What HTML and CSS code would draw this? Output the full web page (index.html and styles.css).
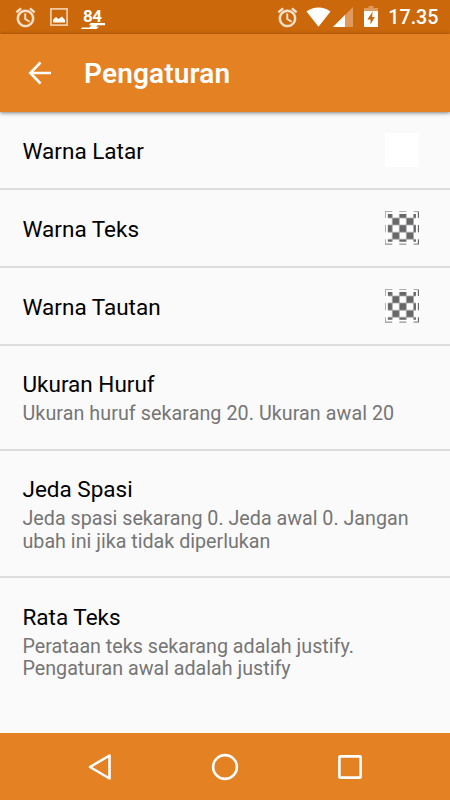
FILE: index.html
```html
<!DOCTYPE html>
<html lang="id">
<head>
<meta charset="utf-8">
<title>Pengaturan</title>
<link rel="stylesheet" href="styles.css">
</head>
<body>
<svg class="defs" width="0" height="0">
  <defs>
    <symbol id="alarm" viewBox="0 0 24 24">
      <path fill="currentColor" stroke="currentColor" stroke-width=".5" d="M22 5.720l-4.600-3.860-1.290 1.530 4.600 3.860L22 5.720zM7.880 3.390L6.600 1.860 2 5.710l1.290 1.530 4.590-3.850zM12.500 8H11v6l4.750 2.850.75-1.230-4-2.370V8zM12 4c-4.970 0-9 4.030-9 9s4.020 9 9 9a9 9 0 0 0 0-18zm0 16a7 7 0 1 1 0-14 7 7 0 0 1 0 14z"/>
    </symbol>
    <symbol id="checker" viewBox="0 0 34 34">
      <rect width="34" height="34" fill="#fff"/>
      <path fill="#67676a" d="M0 0h7.300v7H0zM14.300 0h7v7h-7zM28.500 0H34v7h-5.500zM7.300 7h7v7h-7zM21.300 7h7.200v7h-7.200zM0 14h7.300v7.200H0zM14.300 14h7v7.200h-7zM28.500 14H34v7.200h-5.500zM7.300 21.200h7v7h-7zM21.300 21.200h7.200v7h-7.200zM0 28.200h7.300V34H0zM14.300 28.200h7V34h-7zM28.500 28.200H34V34h-5.500z"/>
      <path stroke="#aaa" stroke-width=".8" fill="none" d="M2.700 7h29M2.700 14h29M2.700 21.200h29M2.700 28.200h29M7.300 3v28M14.300 3v28M21.300 3v28M28.500 3v28"/>
      <rect x="1.900" y="2" width="30" height="29.700" fill="none" stroke="#fff" stroke-width="1.900"/>
      <path fill="#fff" opacity=".45" d="M0 0h34v1H0zM0 33h34v1H0zM0 0h1v34H0z"/>
    </symbol>
  </defs>
</svg>
<div class="screen">
  <div class="status">
    <svg class="alarm-left" width="23" height="23"><use href="#alarm"/></svg>
    <svg class="picture" width="18" height="18" viewBox="0 0 18 18">
      <rect x=".9" y=".9" width="16.200" height="16.200" fill="none" stroke="#f6d3b1" stroke-width="1.600"/>
      <path fill="#fff" d="M3 14.500v-3l3-2.500 2.500 2L12 8.500l3 3.500v2.500z"/>
    </svg>
    <div class="battery-app">
      <span>84</span>
      <svg width="24" height="6" viewBox="0 0 24 6"><path fill="#fff" d="M9.500 0H24v2.300h-7.500L15 3.700h3L15.500 6H0l1-1.400h7.500L10.500 2.300H8z"/></svg>
    </div>
    <div class="system">
      <svg width="23" height="23"><use href="#alarm"/></svg>
      <svg class="wifi" width="25" height="20" viewBox="0 0 25 20"><path fill="#fff" d="M.5 4.500C7.500-1 17.500-1 24.500 4.500L12.500 19.800z"/></svg>
      <svg class="signal" width="20" height="20" viewBox="0 0 20 20"><path fill="#e09a5e" d="M20 0v20H0z"/><path fill="#fff" d="M12 8v12H0z"/></svg>
      <svg class="battery" width="14" height="21" viewBox="0 0 14 21">
        <path fill="#e09a5e" d="M4.500 0h5v2H14v4H0V2h4.500z"/><path fill="#fff" d="M0 5h14v16H0z"/>
        <path fill="#ca680b" d="M8.800 5.500L3.300 13.500h3.200V18.500L10.800 11H8z"/>
      </svg>
      <span class="clock">17.35</span>
    </div>
  </div>
  <header class="toolbar">
    <svg width="24" height="24" viewBox="0 0 24 24" fill="none" stroke="#fff" stroke-width="2.600"><path d="M23 12H2.500M12.500 1.500L2.300 12 12.500 22.500"/></svg>
    <h1>Pengaturan</h1>
  </header>
  <main class="list">
    <div class="row"><h2>Warna Latar</h2><div class="swatch"></div></div>
    <div class="row"><h2>Warna Teks</h2><svg class="chip" width="34" height="34"><use href="#checker"/></svg></div>
    <div class="row"><h2>Warna Tautan</h2><svg class="chip" width="34" height="34"><use href="#checker"/></svg></div>
    <div class="row detail one-line"><h2>Ukuran Huruf</h2><p>Ukuran huruf sekarang 20. Ukuran awal 20</p></div>
    <div class="row detail two-line"><h2>Jeda Spasi</h2><p>Jeda spasi sekarang 0. Jeda awal 0. Jangan<br>ubah ini jika tidak diperlukan</p></div>
    <div class="row detail last"><h2>Rata Teks</h2><p>Perataan teks sekarang adalah justify.<br>Pengaturan awal adalah justify</p></div>
  </main>
  <nav class="navbar">
    <svg width="24" height="28" viewBox="0 0 24 28"><path d="M21.500 2.500v23L2 14z"/></svg>
    <svg width="28" height="28" viewBox="0 0 28 28"><circle cx="14" cy="14" r="11.900"/></svg>
    <svg width="24" height="24" viewBox="0 0 24 24"><rect x="1.400" y="1.400" width="21.200" height="21.200" rx=".5"/></svg>
  </nav>
</div>
</body>
</html>
```
FILE: styles.css
```css
* { box-sizing: border-box; }

body, h1, h2, p { margin: 0; }

body {
  font-family: Roboto, sans-serif;
  background: #fafafa;
}

.defs { display: none; }

.screen {
  width: 450px;
  height: 800px;
  display: flex;
  flex-direction: column;
  overflow: hidden;
}

.status {
  height: 34px;
  flex: none;
  display: flex;
  align-items: center;
  padding: 0 11.500px 0 14px;
  background: #ca680b;
  color: #fff;
}

.alarm-left { color: #fbe6d3; }

.picture { margin-left: 13px; }

.battery-app {
  width: 24px;
  height: 20px;
  margin: 5px 0 0 13px;
  display: flex;
  flex-direction: column;
}

.battery-app span {
  height: 13px;
  padding-left: 2px;
  font-size: 17px;
  line-height: 13px;
  font-weight: 700;
  letter-spacing: -0.5px;
}

.system {
  margin-left: auto;
  display: flex;
  align-items: center;
  color: #fbe6d3;
}

.wifi { margin-left: 7px; }
.signal { margin-left: 2px; }
.battery { margin: -2px 0 0 11px; }

.clock {
  margin-left: 10px;
  font-size: 19.700px;
  line-height: 24px;
  padding-top: 1px;
  font-weight: 500;
  color: #fff;
}

.toolbar {
  height: 78px;
  flex: none;
  display: flex;
  align-items: center;
  gap: 32px;
  padding-left: 28px;
  background: #e38123;
  color: #fff;
  box-shadow: 0 1px 4px rgba(0, 0, 0, 0.5);
  z-index: 1;
}

.toolbar h1 {
  padding-top: 2px;
  font-size: 28px;
  line-height: 34px;
  font-weight: 600;
  letter-spacing: 0.14px;
}

.list { flex: 1; }

.row {
  height: 78px;
  display: flex;
  align-items: center;
  justify-content: space-between;
  padding: 0 31px 0 22.500px;
  border-bottom: 2px solid #dcdcdc;
}

.row h2 {
  font-size: 22.500px;
  line-height: 26px;
  font-weight: 400;
  color: #000;
  padding-top: 2px;
}

.swatch {
  width: 34px;
  height: 34px;
  background: #fff;
}

.detail {
  display: block;
  padding-top: 23px;
}

.detail p {
  padding-top: 6px;
  font-size: 19.700px;
  line-height: 22.500px;
  color: #757575;
}

.one-line { height: 105px; }
.one-line p { letter-spacing: 0.07px; }
.two-line { height: 127px; }

.last {
  padding-top: 24px;
  border-bottom: 0;
}

.last p { padding-top: 5.500px; }

.navbar {
  height: 67px;
  flex: none;
  display: flex;
  justify-content: space-between;
  align-items: center;
  padding: 0 88px;
  background: #e38123;
  fill: none;
  stroke: #fff;
  stroke-width: 2.600px;
  stroke-linejoin: round;
}
```
